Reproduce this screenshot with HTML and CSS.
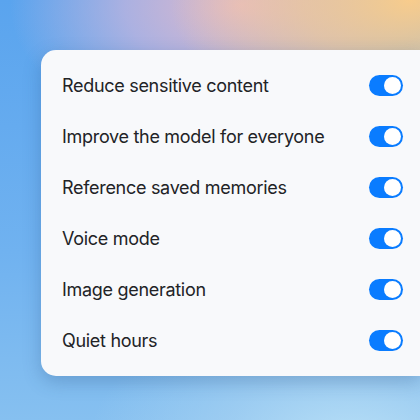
FILE: index.html
```html
<!DOCTYPE html>
<html>
<head>
<meta charset="utf-8">
<link rel="stylesheet" href="styles.css">
</head>
<body>
<div class="scene">
  <div class="card">
    <div class="row"><span class="label">Reduce sensitive content</span><span class="toggle"><span class="knob"></span></span></div>
    <div class="row"><span class="label">Improve the model for everyone</span><span class="toggle"><span class="knob"></span></span></div>
    <div class="row"><span class="label">Reference saved memories</span><span class="toggle"><span class="knob"></span></span></div>
    <div class="row"><span class="label">Voice mode</span><span class="toggle"><span class="knob"></span></span></div>
    <div class="row"><span class="label">Image generation</span><span class="toggle"><span class="knob"></span></span></div>
    <div class="row"><span class="label">Quiet hours</span><span class="toggle"><span class="knob"></span></span></div>
  </div>
</div>
</body>
</html>
```
FILE: styles.css
```css
html, body {
  margin: 0;
  padding: 0;
  width: 420px;
  height: 420px;
  overflow: hidden;
}
.scene {
  width: 420px;
  height: 420px;
  padding: 50px 0 0 41px;
  box-sizing: border-box;
  background:
    radial-gradient(ellipse 240px 140px at 410px 0px, rgba(248,204,140,1) 0%, rgba(248,204,140,0.65) 45%, rgba(248,204,140,0) 100%),
    radial-gradient(ellipse 230px 140px at 240px 5px, rgba(232,186,200,0.95) 0%, rgba(205,182,220,0.7) 50%, rgba(200,180,220,0) 100%),
    radial-gradient(ellipse 260px 140px at 350px 440px, rgba(182,222,246,1) 0%, rgba(170,212,242,0.6) 50%, rgba(160,205,240,0) 100%),
    linear-gradient(180deg, #5aa4ee 0%, #70b2f0 60%, #86c0f0 100%);
  font-family: Inter, "Noto Sans", sans-serif;
}
.card {
  width: 379px;
  height: 326px;
  background: #f8f9fb;
  border-radius: 15px 0 0 15px;
  box-shadow: 0 6px 18px rgba(40, 80, 130, 0.28);
  padding: 10px 0 0 21px;
  box-sizing: border-box;
}
.row {
  width: 341px;
  height: 51px;
  display: flex;
  align-items: center;
  justify-content: space-between;
}
.label {
  font-size: 18px;
  color: #222326;
  letter-spacing: -0.3px;
}
.toggle {
  width: 34px;
  height: 21px;
  border-radius: 11px;
  background: #0a7cff;
  display: flex;
  align-items: center;
  justify-content: flex-end;
  padding: 0 2px;
  box-sizing: border-box;
}
.knob {
  width: 17px;
  height: 17px;
  border-radius: 50%;
  background: #ffffff;
}
```
